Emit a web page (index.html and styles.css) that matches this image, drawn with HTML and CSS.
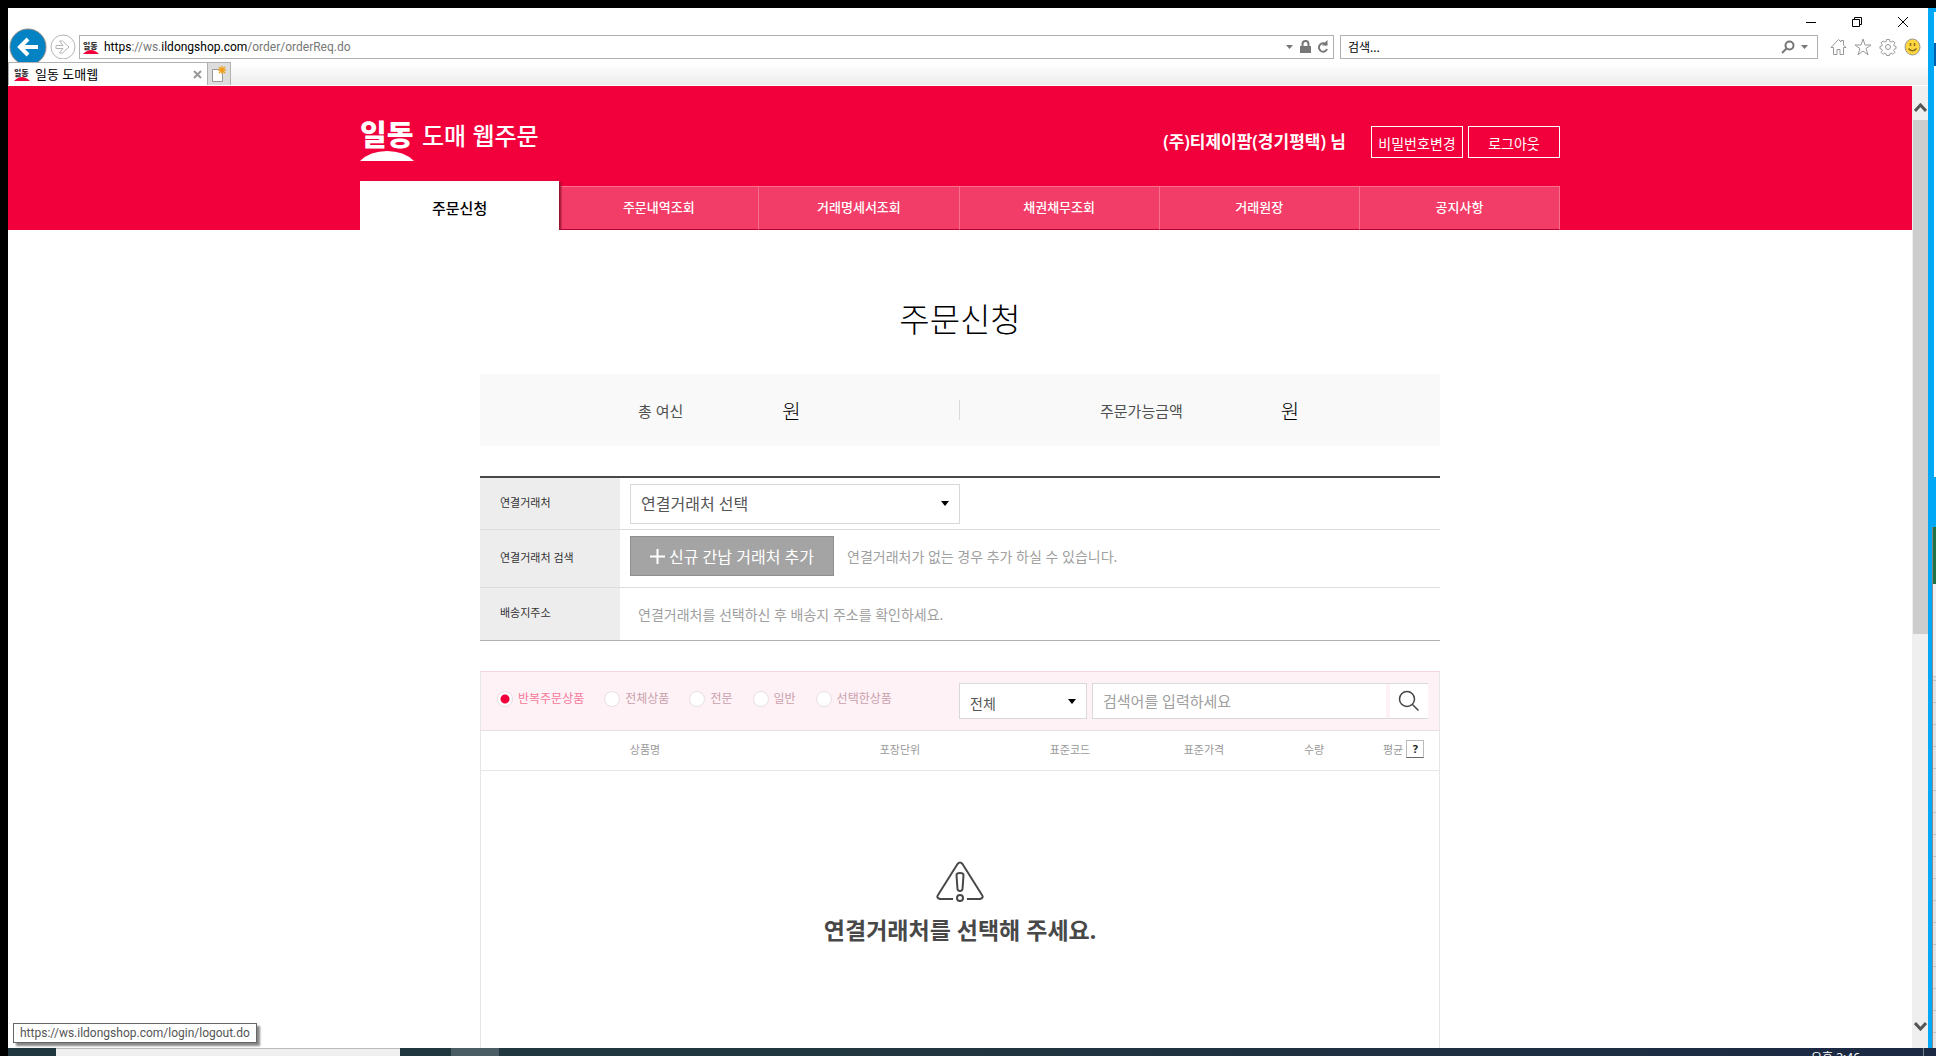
FILE: index.html
```html
<!DOCTYPE html>
<html lang="ko">
<head>
<meta charset="utf-8">
<title>일동 도매웹</title>
<link rel="stylesheet" href="styles.css">
</head>
<body>
<div class="desktop">
  <div class="window">
    <div class="titlebar">
      <button class="win-btn" aria-label="최소화"><svg width="12" height="12"><path d="M1 6.500h10" stroke="#000" fill="none"/></svg></button>
      <button class="win-btn" aria-label="이전 크기로"><svg width="12" height="12"><path d="M1.500 3.500h7v7h-7zM3.500 3.500v-2h7v7h-2" stroke="#000" fill="none"/></svg></button>
      <button class="win-btn" aria-label="닫기"><svg width="12" height="12"><path d="M1 1l10 10M11 1L1 11" stroke="#000" fill="none"/></svg></button>
    </div>
    <div class="toolbar">
      <button class="nav-back" aria-label="뒤로"><svg width="38" height="38"><circle cx="19" cy="19" r="18" fill="#0483c4" stroke="#8a8a8a"/><path d="M29 19H12M19 11l-8 8 8 8" fill="none" stroke="#fff" stroke-width="4"/></svg></button>
      <button class="nav-forward" aria-label="앞으로"><svg width="26" height="26"><circle cx="13" cy="13" r="12" fill="#fff" stroke="#b4b4b4"/><path d="M6 11.500h7l-3.500-4.500h3l6.500 6-6.500 6h-3l3.500-4.500h-7z" fill="none" stroke="#b4b4b4"/></svg></button>
      <div class="field address">
        <span class="favicon"><b>일동</b><svg width="16" height="4"><path d="M0 4Q8-4 16 4z" fill="#f1003c"/></svg></span>
        <span class="url">https<i>://ws.</i>ildongshop.com<i>/order/orderReq.do</i></span>
        <span class="field-icons">
          <svg width="8" height="5"><path d="M0 0h7L3.500 4z" fill="#777"/></svg>
          <svg width="11" height="14"><path d="M0 6h11v7H0z" fill="#777"/><path d="M2.500 7V4a3 3 0 0 1 6 0v3" fill="none" stroke="#777" stroke-width="2"/></svg>
          <svg width="12" height="14"><path d="M9.500 5A4.200 4.200 0 1 0 10 9" fill="none" stroke="#777" stroke-width="2"/><path d="M5 5.500h5.500V0z" fill="#777"/></svg>
        </span>
      </div>
      <div class="field search">
        <input class="search-input" type="text" value="검색..." aria-label="검색">
        <span class="field-icons">
          <svg width="14" height="14"><circle cx="8.500" cy="5.500" r="4" fill="none" stroke="#777" stroke-width="2"/><path d="M5.500 8.500L1 13" stroke="#777" stroke-width="2"/></svg>
          <svg width="8" height="5"><path d="M0 0h7L3.500 4z" fill="#777"/></svg>
        </span>
      </div>
      <div class="tools">
        <svg width="17" height="18" fill="none" stroke="#999"><path d="M1 9.500L8.500 1.500 11 4V2.500h2.500V7L16 9.500h-2.500v7h-3.500v-5H7v5H3.500v-7z"/></svg>
        <svg width="18" height="18" fill="none" stroke="#999"><path d="M9 1l2 6h6l-5 3.600 2 6.200-5-3.800-5 3.800 2-6.200L1 7h6z"/></svg>
        <svg width="18" height="18" viewBox="0 0 18 18" fill="none" stroke="#999"><circle cx="9" cy="9" r="2.500"/><path d="M7.500 1.500h3l.3 2 1.400.6 1.700-1.200 2 2-1.200 1.700.6 1.400 1.700.3v2.400l-1.700.5-.6 1.400 1.200 1.700-2 2-1.700-1.200-1.400.6-.3 1.800h-3l-.3-1.800-1.400-.6-1.700 1.200-2-2 1.200-1.700-.6-1.400-1.700-.5V8.300l1.700-.3.6-1.400-1.200-1.700 2-2 1.700 1.200 1.400-.6z"/></svg>
        <svg width="17" height="20"><ellipse cx="8.500" cy="10" rx="7.500" ry="8" fill="#fcd53f" stroke="#999"/><path d="M6.500 6v3M10.500 6v3M4.500 11.500q4 4.500 8 0" fill="none" stroke="#8a6a1c" stroke-width="1.500"/></svg>
      </div>
    </div>
    <div class="tabs">
      <div class="tab">
        <span class="favicon"><b>일동</b><svg width="16" height="4"><path d="M0 4Q8-4 16 4z" fill="#f1003c"/></svg></span>
        <span class="tab-title">일동 도매웹</span>
        <button class="tab-close" aria-label="탭 닫기"><svg width="9" height="9"><path d="M1 1l7 7M8 1L1 8" stroke="#999" stroke-width="2"/></svg></button>
      </div>
      <button class="tab-new" aria-label="새 탭"><svg width="16" height="16"><path d="M1.500 3.500h10v12h-10z" fill="#fff" stroke="#999"/><path d="M11 0v8M7 4h8M8 1l6 6M14 1L8 7" stroke="#f0a020" stroke-width="1.500"/></svg></button>
    </div>
    <div class="viewport">
      <div class="page">
        <header class="header">
          <div class="header-inner">
            <div class="header-top">
              <a class="logo" href="#"><span class="logo-mark"><b>일동</b><svg width="54" height="10"><path d="M0 10Q10 0 27 0T54 10z" fill="#fff"/></svg></span><span class="logo-text">도매 웹주문</span></a>
              <div class="account"><strong>(주)티제이팜(경기평택) 님</strong><button>비밀번호변경</button><button>로그아웃</button></div>
            </div>
            <nav class="menu">
              <a class="active" href="#">주문신청</a><a href="#">주문내역조회</a><a href="#">거래명세서조회</a><a href="#">채권채무조회</a><a href="#">거래원장</a><a href="#">공지사항</a>
            </nav>
          </div>
        </header>
        <main class="content">
          <h1>주문신청</h1>
          <div class="summary">
            <div class="credit"><span>총 여신</span><b>원</b></div>
            <div class="available"><span>주문가능금액</span><b>원</b></div>
          </div>
          <table class="form">
            <tr class="row-partner"><th><label for="partner">연결거래처</label></th><td>
              <span class="select partner"><select id="partner"><option>연결거래처 선택</option></select><svg width="8" height="5"><path d="M0 0h8L4 5z"/></svg></span></td></tr>
            <tr class="row-find"><th>연결거래처 검색</th><td><div class="find"><button class="add"><svg width="15" height="15"><path d="M7.500 0v15M0 7.500h15" stroke="#fff" stroke-width="2"/></svg>신규 간납 거래처 추가</button><span>연결거래처가 없는 경우 추가 하실 수 있습니다.</span></div></td></tr>
            <tr class="row-address"><th>배송지주소</th><td><span class="address-hint">연결거래처를 선택하신 후 배송지 주소를 확인하세요.</span></td></tr>
          </table>
          <section class="products">
            <form class="filter">
              <div class="kinds">
                <label class="checked"><input type="radio" name="kind" checked>반복주문상품</label>
                <label><input type="radio" name="kind">전체상품</label>
                <label><input type="radio" name="kind">전문</label>
                <label><input type="radio" name="kind">일반</label>
                <label><input type="radio" name="kind">선택한상품</label>
              </div>
              <span class="select scope"><select aria-label="검색 범위"><option>전체</option></select><svg width="8" height="5"><path d="M0 0h8L4 5z"/></svg></span>
              <div class="query"><input type="text" placeholder="검색어를 입력하세요" aria-label="검색어"><button type="button" aria-label="검색"><svg width="22" height="22"><circle cx="9" cy="9" r="7.500" fill="none" stroke="#444" stroke-width="1.500"/><path d="M14.500 14.500l6 6" stroke="#444" stroke-width="1.500"/></svg></button></div>
            </form>
            <table class="list">
              <colgroup><col class="c-name"><col class="c-pack"><col class="c-code"><col class="c-price"><col class="c-qty"><col></colgroup>
              <thead><tr><th>상품명</th><th>포장단위</th><th>표준코드</th><th>표준가격</th><th>수량</th><th><span class="avg">평균<button aria-label="평균 도움말">?</button></span></th></tr></thead>
            </table>
            <div class="empty">
              <svg width="48" height="42" fill="none" stroke="#484848" stroke-width="2"><path d="M17 38H4q-4-1-2-4L21.500 3q2.500-3 5 0L46 34q2 3-2 4H31"/><path d="M20.500 14q0-2 3.500-2t3.500 2l-1 14q-.5 2-2.500 2t-2.500-2z"/><circle cx="24" cy="37" r="3"/></svg>
              <p>연결거래처를 선택해 주세요.</p>
            </div>
          </section>
        </main>
      </div>
      <div class="scrollbar">
        <svg width="13" height="9"><path d="M1 8l5.500-6L12 8" fill="none" stroke="#555" stroke-width="3"/></svg>
        <div class="track"><div class="thumb"></div></div>
        <svg width="13" height="9"><path d="M1 1l5.500 6L12 1" fill="none" stroke="#555" stroke-width="3"/></svg>
      </div>
      <div class="status">https://ws.ildongshop.com/login/logout.do</div>
    </div>
  </div>
  <div class="behind"><div class="behind-app"><i></i></div><div class="behind-sheet"><i></i><b></b></div></div>
  <div class="taskbar"><div class="task-search"></div><div class="task-active"></div><time>오후 3:46</time></div>
</div>
</body>
</html>
```
FILE: styles.css
```css
* { box-sizing: border-box; }
body { margin: 0; background: #000; font-family: "Noto Sans", "Noto Sans CJK KR", sans-serif; }
button, input, select { font: inherit; margin: 0; padding: 0; border: 0; background: none; color: inherit; appearance: none; border-radius: 0; }
a { color: inherit; text-decoration: none; }
svg { display: block; flex: none; }

.desktop { height: 100vh; padding: 8px 0 0 8px; display: grid; grid-template: minmax(0, 1fr) 8px / minmax(0, 1fr) 8px; }
.window { display: flex; flex-direction: column; background: #fff; min-height: 0; }

.titlebar { height: 27px; display: flex; justify-content: flex-end; padding-right: 2px; }
.win-btn { width: 46px; height: 27px; display: grid; place-items: center; }
.toolbar { height: 24px; display: flex; align-items: center; padding-left: 1px; }
.nav-back { width: 38px; height: 38px; position: relative; }
.nav-forward { width: 26px; height: 26px; margin: 0 3px; }
.field { height: 24px; border: 1px solid #b0b0b0; display: flex; align-items: center; background: #fff; font-size: 12px; }
.address { flex: 1; padding: 0 4px 0 3px; }
.search { width: 478px; margin-left: 6px; padding: 0 8px 0 7px; }
.search-input { flex: 1; min-width: 0; }
.url { flex: 1; margin-left: 5px; font-family: Roboto, sans-serif; }
.url i { font-style: normal; color: #777; }
.field-icons { display: flex; align-items: center; gap: 6px; }
.favicon { width: 16px; display: block; }
.favicon b { display: block; font-size: 8px; line-height: 9px; font-weight: 900; color: #333; white-space: nowrap; }
.tools { width: 110px; display: flex; gap: 7px; align-items: center; padding-left: 12px; }

.tabs { height: 27px; padding-top: 3px; display: flex; border-bottom: 1px solid #fff; background: linear-gradient(#fff 5px, #ececec); }
.tab { width: 200px; display: flex; align-items: center; padding: 0 5px; background: #fff; border: 1px solid #b0b0b0; border-bottom: 0; font-size: 13px; line-height: 20px; position: relative; }
.tab-title { flex: 1; margin-left: 5px; }
.tab-new { width: 23px; background: #ddd; border: 1px solid #b0b0b0; border-left: 0; border-bottom: 0; display: grid; place-items: center; }

.viewport { flex: 1; min-height: 0; display: flex; position: relative; overflow: hidden; }
.page { flex: 1; min-width: 0; display: flex; flex-direction: column; overflow: hidden; }
.scrollbar { width: 16px; background: #efefef; display: flex; flex-direction: column; align-items: center; padding: 17px 0; }
.track { flex: 1; width: 15px; padding: 8px 0; }
.thumb { height: 57.5%; background: #cdcdcd; }

.header { background: #f1003c; color: #fff; }
.header-inner { max-width: 1200px; margin: 0 auto; }
.header-top { height: 95px; display: flex; justify-content: space-between; padding-top: 37px; }
.logo { display: flex; gap: 8px; align-items: flex-start; }
.logo-mark b { display: block; font-size: 29px; line-height: 24px; margin-bottom: 4px; font-weight: 900; width: 54px; }
.logo-text { font-size: 24px; line-height: 26px; font-weight: 500; }
.account { display: flex; align-items: flex-start; padding-top: 3px; gap: 5px; }
.account strong { font-size: 17px; line-height: 32px; font-weight: 600; margin-right: 20px; }
.account button { width: 92px; height: 32px; border: 1px solid #fff; font-size: 14px; padding-top: 1px; }
.menu { display: flex; align-items: flex-end; height: 49px; }
.menu a { flex: 1; height: 44px; line-height: 40px; text-align: center; font-size: 13px; font-weight: 500; background: #f33d69; border: 1px solid #f9708f; border-left: 0; border-bottom-color: #b8002e; }
.menu .active { height: 49px; line-height: 54px; font-size: 15px; color: #000; background: #fff; border: 0; box-shadow: 2px 1px 2px #90102e; clip-path: inset(-2px -4px 0 0); }

.content { flex: 1; width: 100%; max-width: 960px; margin: 0 auto; padding-top: 60px; display: flex; flex-direction: column; }
h1 { margin: 0; font-size: 33px; line-height: 60px; font-weight: 300; text-align: center; color: #000; }
.summary { margin-top: 24px; height: 72px; background: #f9f9f9; display: grid; grid-template-columns: 1fr 1fr; align-items: center; flex: none; }
.summary > div { height: 20px; display: flex; align-items: center; }
.summary span { font-size: 15px; color: #505050; }
.summary b { font-size: 20px; font-weight: 300; color: #000; }
.credit { padding-left: 158px; gap: 99px; border-right: 1px solid #d9d9d9; }
.available { padding-left: 140px; gap: 98px; }

.form { margin-top: 30px; width: 100%; border-collapse: separate; border-spacing: 0; border-top: 2px solid #484848; border-bottom: 1px solid #b2b2b2; }
.form th { width: 140px; padding: 0 0 4px 20px; background: #ededed; text-align: left; font-size: 11px; font-weight: 400; color: #333; }
.form td { padding: 0 0 0 10px; font-size: 14px; color: #a0a0a0; }
.form tr + tr > * { border-top: 1px solid #ddd; }
.row-partner { height: 51px; }
.row-find { height: 58px; }
.row-address { height: 53px; }
.select { display: grid; align-items: center; border: 1px solid #d9d9d9; background: #fff; color: #555; }
.select select, .select svg { grid-area: 1 / 1; }
.select select { width: 100%; height: 100%; padding-left: 10px; }
.select svg { justify-self: end; margin-right: 10px; pointer-events: none; }
.partner { width: 330px; height: 40px; font-size: 16px; }
.find { display: flex; gap: 13px; align-items: center; padding-bottom: 5px; }
.add { width: 204px; height: 40px; background: #a4a4a4; border: 1px solid #8f8f8f; color: #fff; font-size: 16px; display: flex; align-items: center; justify-content: center; gap: 4px; }
.address-hint { padding-left: 8px; }

.products { margin-top: 30px; flex: 1; border: 1px solid #e6e6e6; border-top-color: #f7d6df; border-bottom: 0; min-height: 400px; }
.filter { height: 59px; background: #fef2f6; border-bottom: 1px solid #e6e0e2; display: flex; align-items: flex-start; padding: 11px 11px 0 16px; }
.kinds { flex: 1; display: flex; gap: 20px; padding-top: 7px; font-size: 12px; line-height: 18px; color: #c9a0ac; }
.kinds label { display: flex; align-items: center; gap: 5px; }
.kinds .checked { color: #f5789a; }
.kinds input { width: 16px; height: 16px; border: 1px solid #e8e0e2; border-radius: 50%; background: #fff; }
.kinds input:checked { background: radial-gradient(circle, #f1003c 4px, #fff 5px); }
.scope { width: 128px; height: 36px; font-size: 14px; }
.scope select { padding-top: 4px; }
.query { margin-left: 5px; width: 336px; height: 36px; display: flex; border: 1px solid #d9d9d9; border-right: 0; background: #fff; }
.query input { flex: 1; min-width: 0; padding-left: 10px; font-size: 15px; }
.query input::placeholder { color: #a0a0a0; opacity: 1; }
.query button { width: 42px; border-left: 4px solid #fef2f6; display: grid; place-items: center; }
.list { width: 100%; table-layout: fixed; border-collapse: collapse; border-bottom: 1px solid #e6e6e6; }
.list th { height: 39px; padding: 0 0 3px; font-size: 11px; font-weight: 400; color: #999; }
.c-name { width: 328px; }
.c-pack { width: 182px; }
.c-code { width: 158px; }
.c-price { width: 110px; }
.c-qty { width: 110px; }
.avg { display: flex; align-items: center; gap: 3px; padding-left: 14px; }
.avg button { width: 18px; height: 18px; border: 1px solid #bbb; border-bottom-color: #666; color: #222; font-weight: 700; line-height: 16px; }
.empty { padding-top: 90px; display: flex; flex-direction: column; align-items: center; }
.empty p { margin: 10px 0 0; font-size: 23px; line-height: 34px; font-weight: 700; color: #484848; }

.status { position: absolute; left: 5px; bottom: 5px; height: 20px; padding: 0 6px; border: 1px solid #666; background: #fff; color: #555; font-family: Roboto, sans-serif; font-size: 12px; line-height: 18px; box-shadow: 3px 3px 2px #888; }

.behind { background: #00a8f6; display: flex; flex-direction: column; align-items: flex-end; padding-top: 4px; }
.behind-app { width: 2px; height: 465px; background: #fff; padding-top: 31px; }
.behind-app i { display: block; height: 23px; background: #0060b0; }
.behind-sheet { width: 4px; flex: 1; margin-top: 50px; border-left: 1px solid #888; background: repeating-linear-gradient(#e4e4e4 0 21px, #c4c4c4 21px 22px); }
.behind-sheet i { display: block; height: 57px; background: #217346; }
.behind-sheet b { display: block; height: 93px; background: #f1f1f1; border-bottom: 1px solid #ccc; }

.taskbar { grid-column: 1 / -1; display: flex; overflow: hidden; background: linear-gradient(90deg, #21373f 40%, #1b2943); }
.task-search { margin-left: 48px; width: 344px; background: #f0f0f0; border-top: 1px solid #bbb; }
.task-active { margin-left: 51px; width: 48px; background: #4b5d64; }
.taskbar time { margin-left: auto; width: 113px; padding-right: 62px; border-right: 1px solid #77808f; margin-right: 12px; color: #fff; font-size: 12px; line-height: 20px; white-space: nowrap; }
```
